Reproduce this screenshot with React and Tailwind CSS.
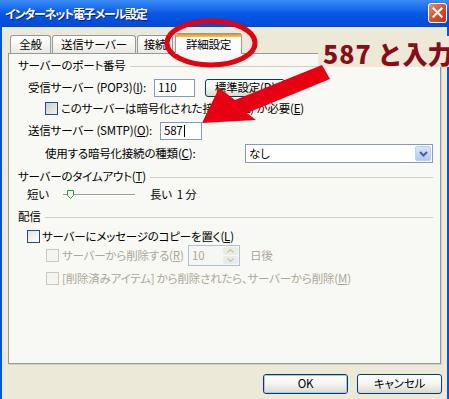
import React from "react";

const U = ({ children }) => <span className="underline underline-offset-[1px]">{children}</span>;

function Checkbox({ disabled, shaded }) {
  if (disabled)
    return <div className="w-[13px] h-[13px] shrink-0 border border-[#cac8bb] bg-[#f4f4f0]" />;
  return (
    <div
      className={`w-[13px] h-[13px] shrink-0 border border-[#1c5180] ${
        shaded ? "bg-gradient-to-br from-[#cfcfc8] to-[#f2f2ee]" : "bg-gradient-to-br from-[#e2e2dc] to-white"
      }`}
    />
  );
}

function Group({ children }) {
  return (
    <div className="flex items-center h-[14px] pl-[9px] pr-[7px]">
      <span className="whitespace-nowrap">{children}</span>
      <div className="flex-1 h-px bg-[#d0d0bf] ml-[4px]" />
    </div>
  );
}

function Tab({ w, selected, children }) {
  if (selected)
    return (
      <div
        className={`${w} relative z-10 h-[21px] -mb-px flex flex-col rounded-t-[3px] border border-b-0 border-[#919b9c] bg-[#fcfcfe] overflow-hidden`}
      >
        <div className="h-[3px] bg-gradient-to-b from-[#e68b2c] to-[#ffc73c]" />
        <div className="flex-1 flex items-center justify-center pb-[1px]">{children}</div>
      </div>
    );
  return (
    <div
      className={`${w} h-[18px] flex items-center justify-center rounded-t-[3px] border border-b-0 border-[#919b9c] bg-gradient-to-b from-white via-[#f7f6f2] to-[#e9e8e2]`}
    >
      {children}
    </div>
  );
}

function XPButton({ children, def }) {
  return (
    <div className="w-[85px] h-[20px] rounded-[3px] border border-[#003c74] bg-gradient-to-b from-white via-[#f4f4f0] to-[#dcd8cc] flex items-center justify-center">
      <div
        className={`w-full h-full rounded-[2px] flex items-center justify-center ${
          def ? "border border-[#a8c4ee]" : ""
        }`}
      >
        {children}
      </div>
    </div>
  );
}

export default function App() {
  return (
    <div className="relative w-[449px] h-[399px] overflow-hidden bg-[#0055e5] flex flex-col font-['Noto_Sans_CJK_JP','Liberation_Sans',sans-serif] [font-feature-settings:'palt'] text-[11.5px] tracking-[-0.2px] leading-none text-black">
      {/* Title bar */}
      <div className="h-[27px] shrink-0 flex items-center justify-between bg-gradient-to-b from-[#3b8cf5] via-[#0857e6] to-[#0049d4] pl-[5px] pr-[2px]">
        <span className="text-white font-bold text-[12px] tracking-[-1.2px] [text-shadow:1px_1px_0_#0a1e8a]">
          インターネット電子メール設定
        </span>
        <div className="w-[19px] h-[20px] mt-[-2px] rounded-[3px] border border-white bg-gradient-to-br from-[#ec8c6c] via-[#d9502b] to-[#c1330f] flex items-center justify-center">
          <svg width="11" height="11" viewBox="0 0 11 11">
            <path d="M1.5 1.5 L9.5 9.5 M9.5 1.5 L1.5 9.5" stroke="white" strokeWidth="2.2" strokeLinecap="square" />
          </svg>
        </div>
      </div>

      {/* Body */}
      <div className="flex-1 mx-[2px] bg-[#ece9d8] flex flex-col pl-[6px]">
        {/* Tabs */}
        <div className="mt-[6px] h-[20px] flex items-end pl-[2px]">
          <Tab w="w-[41px]">全般</Tab>
          <div className="w-px" />
          <Tab w="w-[84px]">送信サーバー</Tab>
          <div className="w-px" />
          <Tab w="w-[36px]">接続</Tab>
          <div className="w-[2px]" />
          <Tab w="w-[67px]" selected>
            詳細設定
          </Tab>
        </div>

        {/* Panel */}
        <div className="w-[433px] h-[311px] border border-[#919b9c] bg-[#f8f8f4] flex flex-col shadow-[1px_1px_0_#d5d2c4]">
          <div className="mt-[5px]">
            <Group>サーバーのポート番号</Group>
          </div>

          <div className="mt-[5px] h-[19px] flex items-center pl-[19px]">
            <div className="w-[126px] whitespace-nowrap">
              受信サーバー (POP3)(<U>I</U>):
            </div>
            <div className="w-[41px] h-[18px] border border-[#7f9db9] bg-white flex items-center pl-[3px]">110</div>
            <div className="ml-[10px] w-[80px] h-[18px] rounded-[3px] border border-[#003c74] bg-gradient-to-b from-white via-[#f4f4f0] to-[#dcd8cc] flex items-center justify-center">
              標準設定(<U>D</U>)
            </div>
          </div>

          <div className="mt-[5px] h-[13px] flex items-center pl-[36px]">
            <Checkbox shaded />
            <span className="ml-[3px] whitespace-nowrap">
              このサーバーは暗号化された接続 (SSL) が必要(<U>E</U>)
            </span>
          </div>

          <div className="mt-[7px] h-[18px] flex items-center pl-[19px]">
            <div className="w-[132px] whitespace-nowrap">
              送信サーバー (SMTP)(<U>O</U>):
            </div>
            <div className="w-[42px] h-[18px] border border-[#7f9db9] bg-white flex items-center pl-[3px]">
              587<span className="w-px h-[12px] bg-black ml-px" />
            </div>
          </div>

          <div className="mt-[4px] h-[19px] flex items-center pl-[36px]">
            <div className="w-[200px] whitespace-nowrap">
              使用する暗号化接続の種類(<U>C</U>):
            </div>
            <div className="w-[188px] h-[19px] border border-[#7f9db9] bg-white flex items-center justify-between pl-[3px] pr-px">
              <span>なし</span>
              <div className="w-[16px] h-[15px] rounded-[2px] border border-[#bccdf5] bg-gradient-to-b from-[#d8e4fd] to-[#b4c8f8] flex items-center justify-center">
                <svg width="9" height="6" viewBox="0 0 9 6">
                  <path d="M1 1 L4.5 4.5 L8 1" stroke="#4d6185" strokeWidth="2" fill="none" />
                </svg>
              </div>
            </div>
          </div>

          <div className="mt-[7px]">
            <Group>
              サーバーのタイムアウト(<U>T</U>)
            </Group>
          </div>

          <div className="mt-[4px] h-[14px] flex items-center pl-[18px]">
            <span className="w-[36px]">短い</span>
            <div className="relative w-[72px] h-[14px] flex items-center">
              <div className="w-full h-[2px] border-t border-[#9d9d9d] border-b border-b-white" />
              <svg className="absolute left-[4px] top-[2px]" width="7" height="9" viewBox="0 0 7 9">
                <path d="M0.5 0.5 H6.5 V5.5 L3.5 8.5 L0.5 5.5 Z" fill="#f4f4f0" stroke="#2c9a2c" strokeWidth="1" />
              </svg>
            </div>
            <span className="ml-[15px]">長い&nbsp;&nbsp;1 分</span>
          </div>

          <div className="mt-[8px]">
            <Group>配信</Group>
          </div>

          <div className="mt-[6px] h-[13px] flex items-center pl-[18px]">
            <Checkbox />
            <span className="ml-[2px] whitespace-nowrap">
              サーバーにメッセージのコピーを置く(<U>L</U>)
            </span>
          </div>

          <div className="mt-[2px] h-[21px] flex items-center pl-[37px] text-[#aca899]">
            <Checkbox disabled />
            <span className="ml-[3px] w-[126px] whitespace-nowrap">
              サーバーから削除する(<U>R</U>)
            </span>
            <div className="w-[52px] h-[21px] border border-[#aec0d8] bg-[#f6f6f3] flex items-center justify-between pl-[3px] pr-px">
              <span>10</span>
              <div className="w-[15px] h-[17px] flex flex-col gap-px">
                <div className="flex-1 rounded-[2px] bg-[#ebebe6] flex items-center justify-center">
                  <svg width="7" height="4" viewBox="0 0 7 4">
                    <path d="M0.5 3.5 L3.5 0.5 L6.5 3.5" stroke="#c6c4b8" fill="none" strokeWidth="1.3" />
                  </svg>
                </div>
                <div className="flex-1 rounded-[2px] bg-[#ebebe6] flex items-center justify-center">
                  <svg width="7" height="4" viewBox="0 0 7 4">
                    <path d="M0.5 0.5 L3.5 3.5 L6.5 0.5" stroke="#c6c4b8" fill="none" strokeWidth="1.3" />
                  </svg>
                </div>
              </div>
            </div>
            <span className="ml-[10px]">日後</span>
          </div>

          <div className="mt-[6px] h-[13px] flex items-center pl-[37px] text-[#aca899]">
            <Checkbox disabled />
            <span className="ml-[3px] whitespace-nowrap">
              [削除済みアイテム] から削除されたら、サーバーから削除(<U>M</U>)
            </span>
          </div>
        </div>

        {/* Buttons */}
        <div className="mt-[10px] flex pl-[255px] gap-[9px]">
          <XPButton def>OK</XPButton>
          <XPButton>キャンセル</XPButton>
        </div>
      </div>

      {/* Annotation: label */}
      <div className="absolute left-[318px] top-[36px] w-[140px] h-[31px] bg-[#ece9d8] flex items-end pl-[5px] pb-[1px]">
        <span className="whitespace-nowrap font-['Noto_Sans_CJK_JP',sans-serif] font-black text-[25px] leading-none text-[#8a0c16] tracking-normal [font-feature-settings:normal]">
          <span className="tracking-[1px]">587</span> と入力
        </span>
      </div>

      {/* Annotation: ellipse + arrow */}
      <svg className="absolute inset-0 pointer-events-none" width="449" height="399" viewBox="0 0 449 399">
        <ellipse cx="211" cy="43" rx="44" ry="22" fill="none" stroke="#e60012" strokeWidth="5" />
        <polygon
          points="202,123 219,88 235,100 322,65 330,79 247,113 256,120"
          fill="#e60012"
        />
      </svg>
    </div>
  );
}
